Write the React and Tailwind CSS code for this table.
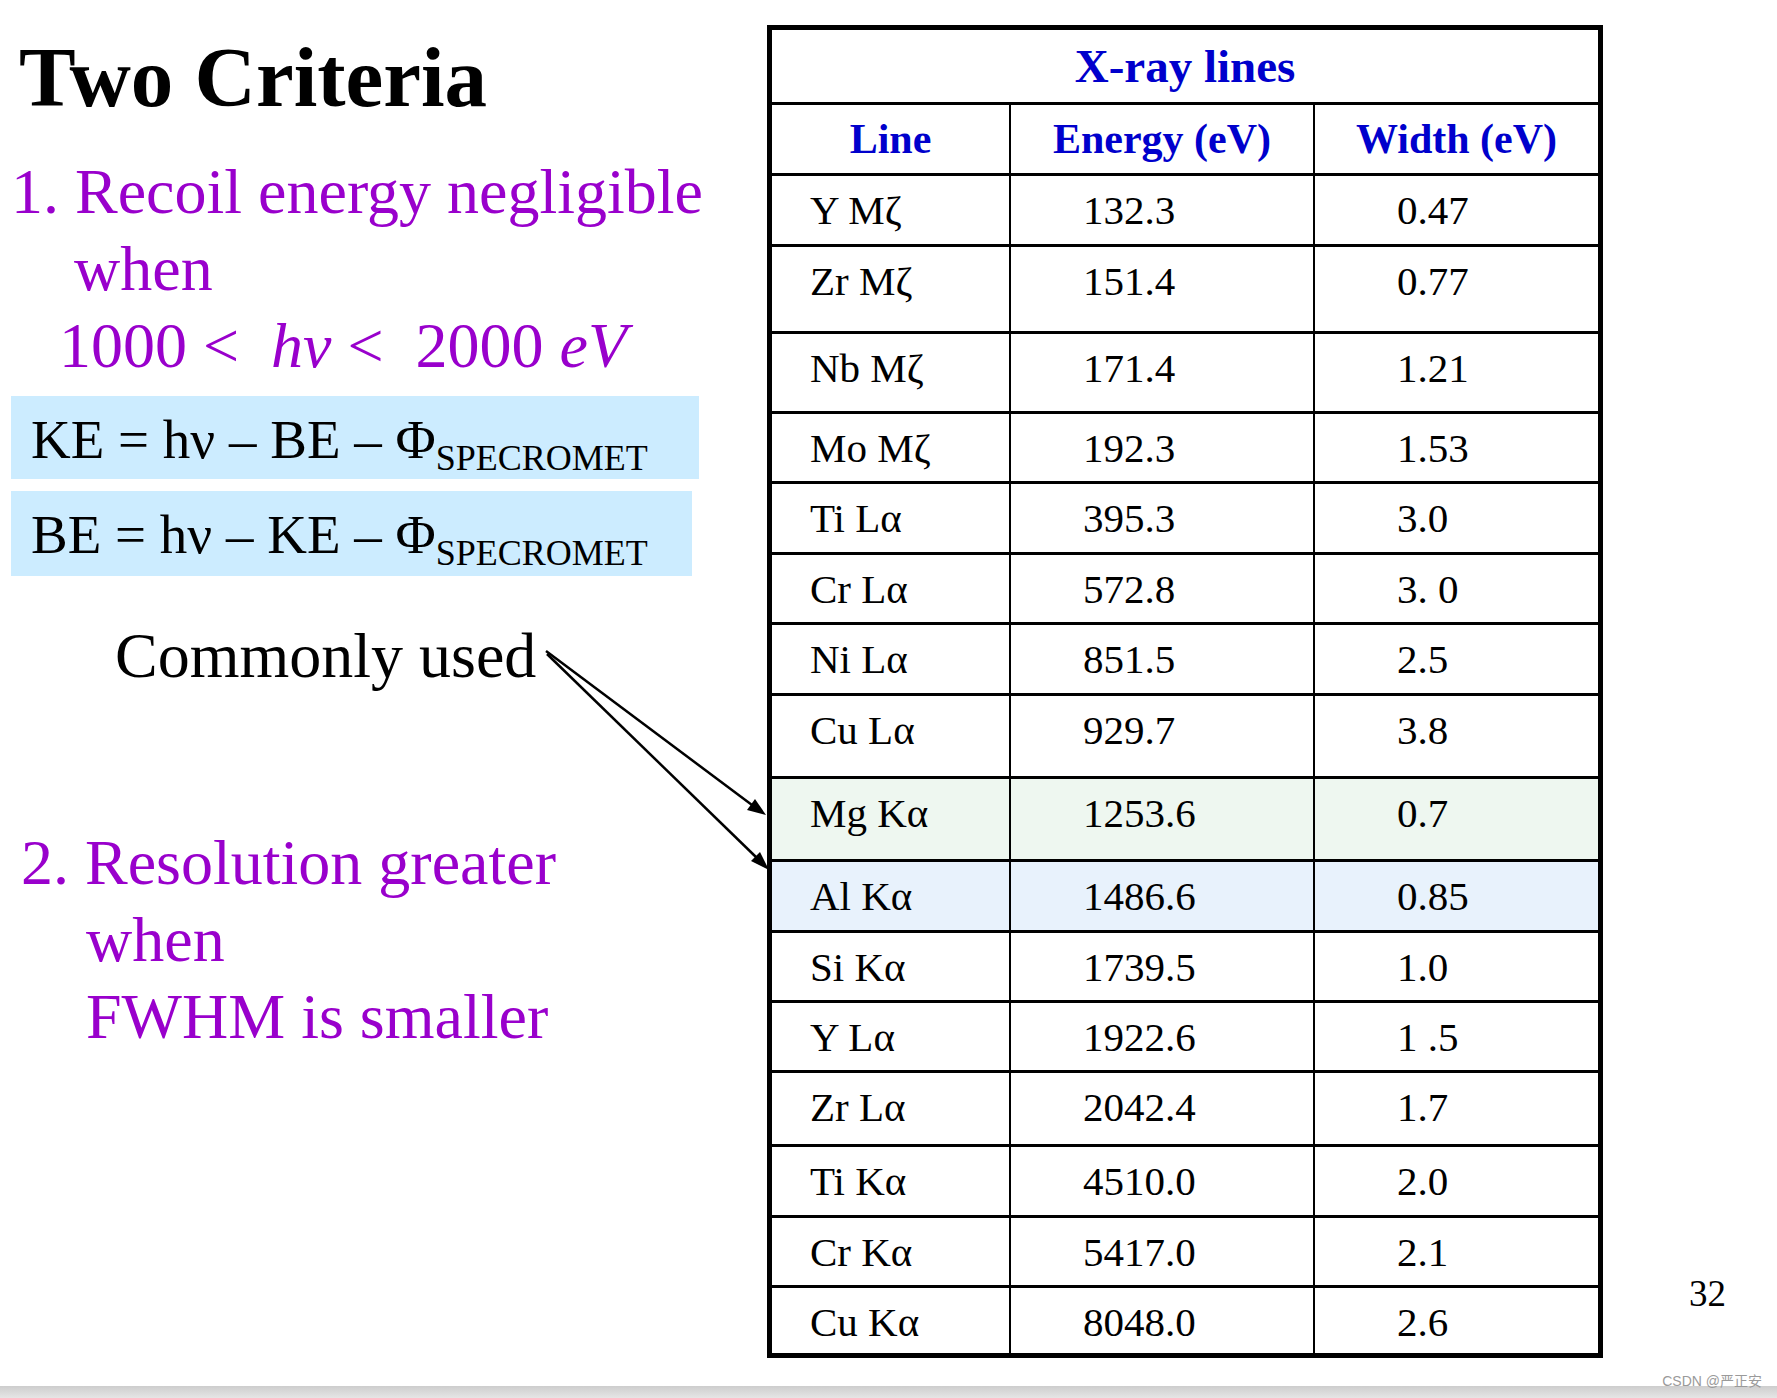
const rows = [
  { line: 'Y Mζ', energy: '132.3', width: '0.47', h: 'h-[71px]' },
  { line: 'Zr Mζ', energy: '151.4', width: '0.77', h: 'h-[87px]' },
  { line: 'Nb Mζ', energy: '171.4', width: '1.21', h: 'h-[80px]' },
  { line: 'Mo Mζ', energy: '192.3', width: '1.53', h: 'h-[70px]' },
  { line: 'Ti Lα', energy: '395.3', width: '3.0', h: 'h-[71px]' },
  { line: 'Cr Lα', energy: '572.8', width: '3. 0', h: 'h-[70px]' },
  { line: 'Ni Lα', energy: '851.5', width: '2.5', h: 'h-[71px]' },
  { line: 'Cu Lα', energy: '929.7', width: '3.8', h: 'h-[83px]' },
  { line: 'Mg Kα', energy: '1253.6', width: '0.7', h: 'h-[83px]', bg: 'bg-[#eef7f0]' },
  { line: 'Al Kα', energy: '1486.6', width: '0.85', h: 'h-[71px]', bg: 'bg-[#e8f2fc]' },
  { line: 'Si Kα', energy: '1739.5', width: '1.0', h: 'h-[70px]' },
  { line: 'Y Lα', energy: '1922.6', width: '1 .5', h: 'h-[70px]' },
  { line: 'Zr Lα', energy: '2042.4', width: '1.7', h: 'h-[74px]' },
  { line: 'Ti Kα', energy: '4510.0', width: '2.0', h: 'h-[71px]' },
  { line: 'Cr Kα', energy: '5417.0', width: '2.1', h: 'h-[70px]' },
  { line: 'Cu Kα', energy: '8048.0', width: '2.6', h: 'h-[68px]' },
]

function XrayTable() {
  return (
    <div className="mt-[25px] flex h-[1333px] w-[836px] shrink-0 flex-col border-[5px] border-black text-black">
      <div className="h-[72px] pt-[11px] text-center text-[47px] font-bold leading-[50px] text-[#0000cc]">
        X-ray lines
      </div>
      <div className="flex h-[71px] border-t-[3px] border-black text-[42px] font-bold leading-[50px] text-[#0000cc]">
        <div className="w-[239px] border-r-2 border-black pt-[9px] text-center">Line</div>
        <div className="w-[304px] border-r-2 border-black pt-[9px] text-center">Energy (eV)</div>
        <div className="flex-1 pt-[9px] text-center">Width (eV)</div>
      </div>
      {rows.map((r) => (
        <div key={r.line} className={`flex border-t-[3px] border-black text-[41px] leading-[50px] ${r.h} ${r.bg || ''}`}>
          <div className="w-[239px] border-r-2 border-black pl-[38px] pt-[9px]">{r.line}</div>
          <div className="w-[304px] border-r-2 border-black pl-[72px] pt-[9px]">{r.energy}</div>
          <div className="flex-1 pl-[82px] pt-[9px]">{r.width}</div>
        </div>
      ))}
    </div>
  )
}

function Formula({ left, mid, width, h }) {
  return (
    <div className={`ml-[11px] ${width} ${h} bg-[#ccecff] pl-[20px] pt-[4px] text-[55px] leading-[79px] text-black`}>
      {left} = hν – {mid} – Φ
      <span className="relative top-[12px] text-[36px]">SPECROMET</span>
    </div>
  )
}

export default function App() {
  return (
    <div className="relative flex h-[1398px] w-[1777px] flex-col overflow-hidden bg-white font-['Liberation_Serif','Times_New_Roman',serif]">
      <div className="flex h-[1386px]">
        <div className="w-[767px] shrink-0">
          <h1 className="pl-[19px] pt-[35px] text-[85px] font-bold leading-[84px] text-black">Two Criteria</h1>

          <div className="mt-[34px] text-[64px] leading-[77px] text-[#9900cc]">
            <p className="pl-[11px]">1. Recoil energy negligible</p>
            <p className="pl-[74px]">when</p>
            <p className="whitespace-pre pl-[59px]">
              1000 &lt;  <i>hv</i> &lt;  2000 <i>eV</i>
            </p>
          </div>

          <div className="mt-[12px] flex flex-col gap-[12px]">
            <Formula left="KE" mid="BE" width="w-[688px]" h="h-[83px]" />
            <Formula left="BE" mid="KE" width="w-[681px]" h="h-[85px]" />
          </div>

          <p className="mt-[41px] pl-[115px] text-[64px] leading-[77px] text-black">Commonly used</p>

          <div className="mt-[130px] text-[64px] leading-[77px] text-[#9900cc]">
            <p className="pl-[21px]">2. Resolution greater</p>
            <p className="pl-[86px]">when</p>
            <p className="pl-[86px]">FWHM is smaller</p>
          </div>
        </div>

        <XrayTable />

        <div className="flex flex-1 flex-col justify-end pb-[74px] pl-[86px] text-[37px] leading-[37px] text-black">
          32
        </div>
      </div>

      <div className="h-[12px] bg-linear-to-b from-[#cdcdcd] to-[#e6e6e6]" />

      <span className="absolute right-[15px] top-[1373px] font-['Liberation_Sans','Noto_Sans_CJK_SC',sans-serif] text-[14px] leading-[16px] text-[#9a9a9a]">
        CSDN @严正安
      </span>

      <svg className="pointer-events-none absolute left-0 top-0" width="1777" height="1398" viewBox="0 0 1777 1398">
        <line x1="546" y1="651" x2="752" y2="805" stroke="black" strokeWidth="2.5" />
        <polygon points="766,815 747,810 755,799" fill="black" />
        <line x1="547" y1="654" x2="757" y2="858" stroke="black" strokeWidth="2.5" />
        <polygon points="769,870 751,861 760,852" fill="black" />
      </svg>
    </div>
  )
}
